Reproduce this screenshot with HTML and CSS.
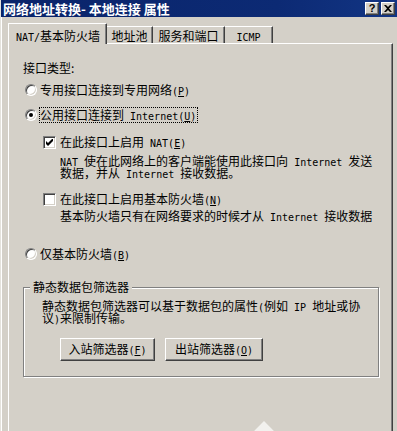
FILE: index.html
```html
<!DOCTYPE html>
<html lang="zh-CN">
<head>
<meta charset="utf-8">
<title>网络地址转换- 本地连接 属性</title>
<link rel="stylesheet" href="styles.css">
</head>
<body>
<div class="window">
  <div class="titlebar">
    <span class="title">网络地址转换- 本地连接 属性</span>
    <div class="tbtns">
      <span class="tbtn help">?</span>
      <span class="tbtn close"><svg width="8" height="7" viewBox="0 0 8 7"><path d="M0 0h2l2 2 2-2h2L5 3.5 8 7H6L4 5 2 7H0l3-3.5z" fill="#000"/></svg></span>
    </div>
  </div>
  <div class="body">
    <div class="tabs">
      <div class="tab active"><span class="en">NAT/</span>基本防火墙</div>
      <div class="tab t2">地址池</div>
      <div class="tab t3">服务和端口</div>
      <div class="tab t4"><span class="en">ICMP</span></div>
    </div>
    <div class="panel">
      <div class="label">接口类型:</div>

      <div class="row radio-row r1">
        <span class="radio"></span>
        <span class="txt">专用接口连接到专用网络<span class="en">(<u>P</u>)</span></span>
      </div>

      <div class="row radio-row r2">
        <span class="radio checked"></span>
        <span class="txt focus">公用接口连接到<span class="en"> Internet(<u>U</u>)</span></span>
      </div>

      <div class="row check-row c1">
        <span class="check on"><svg width="7" height="7" viewBox="0 0 7 7"><path d="M0 2v3l2 2 5-5V-1L2 4z" fill="#000"/></svg></span>
        <span class="txt">在此接口上启用<span class="en"> NAT(<u>E</u>)</span></span>
      </div>

      <div class="desc d1">
        <div class="ln"><span class="en">NAT </span>使在此网络上的客户端能使用此接口向<span class="en"> Internet </span>发送</div>
        <div class="ln">数据，并从<span class="en"> Internet </span>接收数据。</div>
      </div>

      <div class="row check-row c2">
        <span class="check"></span>
        <span class="txt">在此接口上启用基本防火墙<span class="en">(<u>N</u>)</span></span>
      </div>

      <div class="desc d2">
        <div class="ln">基本防火墙只有在网络要求的时候才从<span class="en"> Internet </span>接收数据</div>
      </div>

      <div class="row radio-row r3">
        <span class="radio"></span>
        <span class="txt">仅基本防火墙<span class="en">(<u>B</u>)</span></span>
      </div>

      <fieldset class="group">
        <legend>静态数据包筛选器</legend>
        <div class="group-inner">
          <div class="gdesc">
            <div class="ln">静态数据包筛选器可以基于数据包的属性<span class="en">(</span>例如<span class="en"> IP </span>地址或协</div>
            <div class="ln">议<span class="en">)</span>来限制传输。</div>
          </div>
          <div class="buttons">
            <button class="btn b1">入站筛选器<span class="en">(<u>F</u>)</span></button>
            <button class="btn b2">出站筛选器<span class="en">(<u>O</u>)</span></button>
          </div>
        </div>
      </fieldset>
    </div>
  </div>
  <div class="watermark"></div>
</div>
</body>
</html>
```

FILE: styles.css
```css
* { box-sizing: border-box; }

html, body {
  margin: 0;
  padding: 0;
  width: 397px;
  height: 431px;
  overflow: hidden;
  background: #d4d0c8;
}

body {
  font-family: "Noto Sans CJK SC", "Noto Sans", sans-serif;
  font-size: 12px;
  line-height: 12px;
  color: #000;
}

.en {
  font-family: "DejaVu Sans Mono", "Liberation Mono", monospace;
  font-size: 10px;
  line-height: 10px;
}

u { text-decoration: underline; text-underline-offset: 1px; }

.window {
  position: relative;
  width: 397px;
  height: 431px;
  background: #d4d0c8;
  border-left: 1px solid #e4e2dc;
  box-shadow: inset 1px 0 0 #ffffff;
  overflow: hidden;
}

/* title bar */
.titlebar {
  height: 17px;
  display: flex;
  align-items: center;
  justify-content: space-between;
  background: linear-gradient(to right, #0a246a 0%, #0c2a74 70%, #123584 100%);
  padding: 0 2px 0 2px;
}

.title {
  color: #fff;
  font-weight: bold;
  font-size: 13px;
  line-height: 13px;
  white-space: nowrap;
}

.tbtns {
  display: flex;
  gap: 2px;
}

.tbtn {
  width: 14px;
  height: 13px;
  display: flex;
  align-items: center;
  justify-content: center;
  background: #d4d0c8;
  border-top: 1px solid #fff;
  border-left: 1px solid #fff;
  border-right: 1px solid #404040;
  border-bottom: 1px solid #404040;
  box-shadow: inset -1px -1px 0 #808080;
  font-family: "Liberation Sans", sans-serif;
  font-weight: bold;
  font-size: 11px;
  line-height: 11px;
}

.help { padding-bottom: 1px; }

/* body */
.body {
  padding: 6px 4px 0 7px;
}

.tabs {
  position: relative;
  z-index: 1;
  display: flex;
  align-items: flex-end;
  height: 20px;
}

.tab {
  height: 17px;
  padding-top: 3px;
  text-align: center;
  white-space: nowrap;
  background: #d4d0c8;
  border-top: 1px solid #fff;
  border-right: 1px solid #404040;
  box-shadow: inset -1px 0 0 #808080;
}

.tab.active {
  width: 99px;
  height: 21px;
  margin-bottom: -1px;
  padding-top: 6px;
  padding-left: 7px;
  text-align: left;
  border-left: 1px solid #fff;
  border-radius: 1px 1px 0 0;
}

.t2 { width: 46px; }
.t3 { width: 72px; }
.t4 { width: 48px; }

.panel {
  height: 400px;
  border-top: 1px solid #fff;
  border-left: 1px solid #fff;
  border-right: 1px solid #404040;
  box-shadow: inset -1px 0 0 #808080;
  padding: 18px 0 0 14px;
}

.label {
  height: 12px;
}

.row {
  display: flex;
  align-items: center;
  height: 14px;
  white-space: nowrap;
}

.r1 { margin-top: 9px; }
.r2 { margin-top: 11px; }
.c1 { margin-top: 13px; }
.c2 { margin-top: 13px; }
.r3 { margin-top: 25px; }

.radio {
  width: 12px;
  height: 12px;
  margin-left: 2px;
  margin-right: 3px;
  border-radius: 50%;
  background: #fff;
  border: 1px solid;
  border-color: #808080 #ffffff #ffffff #808080;
  box-shadow: inset 1px 1px 0 #404040, inset -1px -1px 0 #d4d0c8;
  display: flex;
  align-items: center;
  justify-content: center;
}

.radio.checked::after {
  content: "";
  width: 4px;
  height: 4px;
  border-radius: 50%;
  background: #000;
}

.focus {
  outline: 1px dotted #000;
  outline-offset: 0;
  padding: 0 1px 0 0;
  height: 14px;
  line-height: 14px;
}

.check {
  width: 13px;
  height: 13px;
  margin-left: 20px;
  margin-right: 4px;
  background: #fff;
  border: 1px solid;
  border-color: #808080 #ffffff #ffffff #808080;
  box-shadow: inset 1px 1px 0 #404040, inset -1px -1px 0 #d4d0c8;
  display: flex;
  align-items: center;
  justify-content: center;
}

.ln {
  height: 12px;
  line-height: 12px;
  white-space: nowrap;
}

.desc {
  margin-left: 37px;
}

.d1 { margin-top: 6px; }
.d2 { margin-top: 4px; }

/* group box */
.group {
  margin: 20px 0 0 0;
  padding: 0;
  width: 356px;
  height: 96px;
  border: 1px solid #808080;
  box-shadow: inset 1px 1px 0 #fff, 1px 1px 0 #fff;
}

.group legend {
  margin-left: 6px;
  padding: 0 3px 0 3px;
  height: 12px;
  line-height: 12px;
  background: #d4d0c8;
}

.group-inner {
  padding: 7px 0 0 18px;
}

.buttons {
  display: flex;
  gap: 10px;
  margin-top: 14px;
  margin-left: 18px;
}

.btn {
  height: 23px;
  padding: 0;
  font: inherit;
  line-height: 12px;
  color: #000;
  background: #d4d0c8;
  border-top: 1px solid #fff;
  border-left: 1px solid #fff;
  border-right: 1px solid #404040;
  border-bottom: 1px solid #404040;
  box-shadow: inset -1px -1px 0 #808080;
  border-radius: 0;
  white-space: nowrap;
}

.b1 { width: 95px; }
.b2 { width: 98px; }

.watermark {
  position: absolute;
  left: 256px;
  top: 424px;
  width: 14px;
  height: 14px;
  background: #f2f1ee;
  transform: rotate(45deg);
}
```
